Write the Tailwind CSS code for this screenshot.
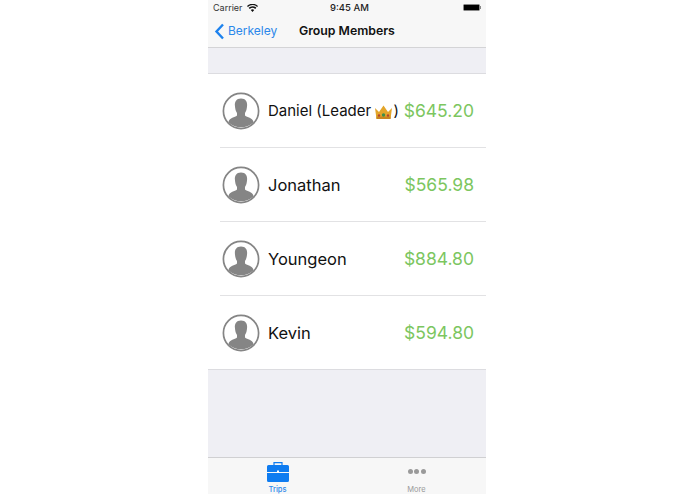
<!DOCTYPE html>
<html lang="en">
<head>
    <meta charset="UTF-8">
    <title>Group Members</title>
    <script src="https://cdn.jsdelivr.net/npm/@tailwindcss/browser@4"></script>
</head>
<body class="bg-white overflow-hidden font-['Inter','Liberation_Sans',sans-serif]">
    <div class="flex justify-center h-[494px] pr-[1px]">
        <div class="w-[278px] h-[494px] flex flex-col bg-[#efeff4]">
            <!-- status + nav -->
            <div class="h-[48px] shrink-0 bg-[#f7f7f7] border-b border-[#d4d4d6]">
                <div class="h-[15px] flex items-center justify-between pl-[5px] pr-[5px] relative">
                    <div class="flex items-center gap-[4px]">
                        <span class="text-[9px] leading-[15px] text-[#333]">Carrier</span>
                        <svg width="11" height="8" viewBox="0 0 22 16"><path fill="#111" d="M11 16 L7.6 12.2 A5 5 0 0 1 14.4 12.2 Z M5.6 10 L3.3 7.5 A11 11 0 0 1 18.7 7.5 L16.4 10 A8 8 0 0 0 5.6 10 Z M1.8 5.8 L0 3.9 A16 16 0 0 1 22 3.9 L20.2 5.8 A13.5 13.5 0 0 0 1.8 5.8 Z"/></svg>
                    </div>
                    <span class="absolute left-[122px] text-[9.5px] leading-[15px] font-medium text-[#222]">9:45 AM</span>
                    <div class="flex items-center">
                        <div class="w-[17px] h-[7px] rounded-[1.5px] bg-black border border-[#888]"></div>
                        <div class="w-[1px] h-[3px] bg-[#888]"></div>
                    </div>
                </div>
                <div class="h-[32px] flex items-center relative">
                    <svg class="ml-[6px]" width="11" height="17" viewBox="0 0 11 17"><path d="M9 1.5 L2.5 8.5 L9 15.5" fill="none" stroke="#1d82ee" stroke-width="2.4"/></svg>
                    <span class="ml-[3px] text-[12px] text-[#2b88ea]">Berkeley</span>
                    <span class="absolute left-[91px] text-[12.3px] font-semibold text-[#111]">Group Members</span>
                </div>
            </div>

            <div class="h-[25px] shrink-0"></div>

            <!-- members -->
            <div id="list" class="bg-white border-t border-b border-[#dcdce0]">
                <div class="h-[74px] ml-[12px] pr-[12px] flex items-center border-b border-[#e2e2e4]">
                    <svg class="ml-[2px] shrink-0" width="38" height="38" viewBox="0 0 38 38"><circle cx="19" cy="19" r="17.6" fill="#fff" stroke="#858585" stroke-width="1.7"/><path fill="#858585" d="M19 6.5 C14.2 6.5 12.6 10 12.9 13.5 C13.1 16.8 13.8 19.4 15 21 L15 23.4 C12.8 25.4 7.6 25.6 6.6 29.6 L6.6 30.4 C9.8 33.6 14.2 35.2 19 35.2 C23.8 35.2 28.2 33.6 31.4 30.4 L31.4 29.6 C30.4 25.6 25.2 25.4 23 23.4 L23 21 C24.2 19.4 24.9 16.8 25.1 13.5 C25.4 10 23.8 6.5 19 6.5 Z"/></svg>
                    <span class="ml-[8px] pt-[2px] text-[15px] text-[#111] whitespace-nowrap">Daniel (Leader <svg class="inline align-[-4px] -ml-[1px]" width="19" height="16" viewBox="0 0 19 16"><path fill="#e3a52a" d="M1 4 L5 8 L9.5 1.5 L14 8 L18 4 L16.5 15 L2.5 15 Z"/><path fill="#c9851f" d="M2.4 12.5 H16.6 L16.4 15 H2.6 Z"/><circle cx="9.5" cy="11" r="1.7" fill="#3f8f4a"/><circle cx="5" cy="11.5" r="1.2" fill="#b5432e"/><circle cx="14" cy="11.5" r="1.2" fill="#b5432e"/></svg>)</span>
                    <span class="ml-auto pt-[1px] text-[17.5px] text-[#7cc65f]">$645.20</span>
                </div>
                <div class="h-[74px] ml-[12px] pr-[12px] flex items-center border-b border-[#e2e2e4]">
                    <svg class="ml-[2px] shrink-0" width="38" height="38" viewBox="0 0 38 38"><circle cx="19" cy="19" r="17.6" fill="#fff" stroke="#858585" stroke-width="1.7"/><path fill="#858585" d="M19 6.5 C14.2 6.5 12.6 10 12.9 13.5 C13.1 16.8 13.8 19.4 15 21 L15 23.4 C12.8 25.4 7.6 25.6 6.6 29.6 L6.6 30.4 C9.8 33.6 14.2 35.2 19 35.2 C23.8 35.2 28.2 33.6 31.4 30.4 L31.4 29.6 C30.4 25.6 25.2 25.4 23 23.4 L23 21 C24.2 19.4 24.9 16.8 25.1 13.5 C25.4 10 23.8 6.5 19 6.5 Z"/></svg>
                    <span class="ml-[8px] pt-[2px] text-[16.5px] text-[#111]">Jonathan</span>
                    <span class="ml-auto pt-[1px] text-[17.5px] text-[#7cc65f]">$565.98</span>
                </div>
                <div class="h-[74px] ml-[12px] pr-[12px] flex items-center border-b border-[#e2e2e4]">
                    <svg class="ml-[2px] shrink-0" width="38" height="38" viewBox="0 0 38 38"><circle cx="19" cy="19" r="17.6" fill="#fff" stroke="#858585" stroke-width="1.7"/><path fill="#858585" d="M19 6.5 C14.2 6.5 12.6 10 12.9 13.5 C13.1 16.8 13.8 19.4 15 21 L15 23.4 C12.8 25.4 7.6 25.6 6.6 29.6 L6.6 30.4 C9.8 33.6 14.2 35.2 19 35.2 C23.8 35.2 28.2 33.6 31.4 30.4 L31.4 29.6 C30.4 25.6 25.2 25.4 23 23.4 L23 21 C24.2 19.4 24.9 16.8 25.1 13.5 C25.4 10 23.8 6.5 19 6.5 Z"/></svg>
                    <span class="ml-[8px] pt-[2px] text-[16.5px] text-[#111]">Youngeon</span>
                    <span class="ml-auto pt-[1px] text-[17.5px] text-[#7cc65f]">$884.80</span>
                </div>
                <div class="h-[73px] ml-[12px] pr-[12px] flex items-center">
                    <svg class="ml-[2px] shrink-0" width="38" height="38" viewBox="0 0 38 38"><circle cx="19" cy="19" r="17.6" fill="#fff" stroke="#858585" stroke-width="1.7"/><path fill="#858585" d="M19 6.5 C14.2 6.5 12.6 10 12.9 13.5 C13.1 16.8 13.8 19.4 15 21 L15 23.4 C12.8 25.4 7.6 25.6 6.6 29.6 L6.6 30.4 C9.8 33.6 14.2 35.2 19 35.2 C23.8 35.2 28.2 33.6 31.4 30.4 L31.4 29.6 C30.4 25.6 25.2 25.4 23 23.4 L23 21 C24.2 19.4 24.9 16.8 25.1 13.5 C25.4 10 23.8 6.5 19 6.5 Z"/></svg>
                    <span class="ml-[8px] pt-[2px] text-[16.5px] text-[#111]">Kevin</span>
                    <span class="ml-auto pt-[1px] text-[17.5px] text-[#7cc65f]">$594.80</span>
                </div>
            </div>

            <div class="flex-1"></div>

            <!-- tab bar -->
            <div class="h-[37px] shrink-0 bg-[#f7f7f7] border-t border-[#d0d0d2] grid grid-cols-2">
                <div class="flex flex-col items-center pt-[3px]">
                    <svg width="22" height="21" viewBox="0 0 22 21"><path fill="none" stroke="#0f7cf0" stroke-width="1.2" d="M7 5 V1.6 H15 V5"/><path fill="#0f7cf0" d="M1.5 4 H20.5 A1.5 1.5 0 0 1 22 5.5 V11 H0 V5.5 A1.5 1.5 0 0 1 1.5 4 Z M0 12 H22 V19.5 A1.5 1.5 0 0 1 20.5 21 H1.5 A1.5 1.5 0 0 1 0 19.5 Z"/><rect x="10" y="9.5" width="2" height="2" fill="#fff"/></svg>
                    <span class="text-[7.5px] leading-[9px] mt-[3px] font-medium text-[#2b88ea]">Trips</span>
                </div>
                <div class="flex flex-col items-center pt-[3px]">
                    <div class="h-[21px] flex items-center gap-[1.5px]">
                        <div class="w-[5px] h-[5px] rounded-full bg-[#9a9a9a]"></div>
                        <div class="w-[5px] h-[5px] rounded-full bg-[#9a9a9a]"></div>
                        <div class="w-[5px] h-[5px] rounded-full bg-[#9a9a9a]"></div>
                    </div>
                    <span class="text-[7.5px] leading-[9px] mt-[3px] text-[#999]">More</span>
                </div>
            </div>
        </div>
    </div>
</body>
</html>
